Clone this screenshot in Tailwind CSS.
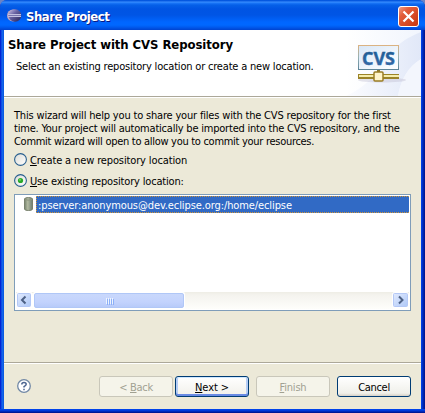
<!DOCTYPE html>
<html lang="en">
<head>
<meta charset="utf-8">
<title>Share Project</title>
<script src="https://cdn.jsdelivr.net/npm/@tailwindcss/browser@4"></script>
</head>
<body class="w-[425px] h-[413px] overflow-hidden bg-[#6b83c4] text-black text-[11px] leading-[13px] whitespace-nowrap font-['DejaVu_Sans_Condensed','DejaVu_Sans',sans-serif] [font-stretch:condensed]">
<main class="w-[425px] h-[413px] flex flex-col rounded-t-[7px] overflow-hidden bg-[linear-gradient(0deg,#00138c_0,#001da0_1px,#0036d5_2px,#0048f1_4px,transparent_4px),linear-gradient(90deg,#0019cf_0,#0831d9_1px,#166aee_2px,#0855dd_4px,#0855dd_421px,#0048f1_421px,#0036d5_422px,#001da0_424px,#00138c_425px)]">
  <header class="h-[30px] shrink-0 flex items-center pl-[7px] pr-[5px] pt-[4px] bg-[linear-gradient(180deg,#0058e0_0,#0958e0_1px,#3b91ff_2px,#1b77f8_3px,#0560e8_5px,#0054e3_9px,#0055e5_15px,#0066ff_22px,#0068ff_25px,#005bf0_27px,#0043cf_30px)]">
    <svg class="w-[15px] h-[13px] shrink-0 -mt-[3px]" viewBox="0 0 15 13">
      <defs><linearGradient id="ecl" x1="0" y1="0" x2="1" y2="1"><stop offset="0" stop-color="#c9bde4"/><stop offset=".4" stop-color="#6962a3"/><stop offset="1" stop-color="#252153"/></linearGradient></defs>
      <ellipse cx="6" cy="6.5" rx="6" ry="6" fill="#b9a6c4"/>
      <ellipse cx="8" cy="6.5" rx="6.3" ry="6.2" fill="url(#ecl)"/>
      <path d="M1 5.5h13M1 7.500h13" stroke="#c2bfe0" stroke-width="1"/><path d="M1.5 6.500h12.5" stroke="#7973ac" stroke-width="1"/>
    </svg>
    <h1 class="ml-[4px] grow text-[13px] leading-[16px] font-bold text-white [text-shadow:1px_1px_0_#0a1883] tracking-[-0.45px]">Share Project</h1>
    <button class="w-[21px] h-[21px] -mt-px mr-px" aria-label="Close">
      <svg class="block w-[21px] h-[21px]" viewBox="0 0 21 21">
        <defs><linearGradient id="cl" x1="0" y1="0" x2="1" y2="1"><stop offset="0" stop-color="#f0a28c"/><stop offset=".3" stop-color="#e35d3b"/><stop offset="1" stop-color="#c6340c"/></linearGradient></defs>
        <rect x=".5" y=".5" width="20" height="20" rx="2.5" fill="url(#cl)" stroke="#fff"/>
        <path d="M5.500 5.500l10 10M15.500 5.500l-10 10" stroke="#fff" stroke-width="2.2"/>
      </svg>
    </button>
  </header>
  <div class="mx-[4px] mb-[4px] h-[379px] flex flex-col bg-[#ece9d8]">
    <section class="h-[68px] shrink-0 flex justify-between bg-white border-b border-white shadow-[inset_0_-1px_0_#aca899]">
      <div>
        <h2 class="mt-[7px] ml-[4px] text-[13px] leading-[16px] font-bold tracking-[-0.08px]">Share Project with CVS Repository</h2>
        <p class="mt-[7px] ml-[12px] tracking-[-0.19px]">Select an existing repository location or create a new location.</p>
      </div>
      <svg class="w-[75px] h-[66px] shrink-0" viewBox="0 0 75 66">
        <defs>
          <linearGradient id="bg" x1="0" y1="0" x2="1" y2="0"><stop offset="0" stop-color="#fff"/><stop offset="1" stop-color="#f1f5fd"/></linearGradient>
          <linearGradient id="sw" x1="0" y1="0" x2="1" y2="0"><stop offset="0" stop-color="#fbfcff"/><stop offset="1" stop-color="#e1e8f8"/></linearGradient>
          <linearGradient id="bd" x1="0" y1="0" x2="0" y2="1"><stop offset="0" stop-color="#dbb383"/><stop offset=".5" stop-color="#93afb4"/><stop offset="1" stop-color="#5d8498"/></linearGradient>
          <linearGradient id="scr" x1="0" y1="0" x2="1" y2="1"><stop offset="0" stop-color="#d8e7f8"/><stop offset="1" stop-color="#fff"/></linearGradient>
          <linearGradient id="tx" x1="0" y1="0" x2="0" y2="1"><stop offset="0" stop-color="#16578d"/><stop offset="1" stop-color="#3a6eae"/></linearGradient>
        </defs>
        <rect width="75" height="66" fill="url(#bg)"/>
        <path d="M75 2C62 7 51 14 43 25C32 44 18 58 0 66H52C55 49 62 37 75 29Z" fill="url(#sw)"/>
        <path d="M75 29C62 37 55 49 52 66H75Z" fill="#f3f6fd"/>
        <ellipse cx="36" cy="50" rx="24" ry="2.500" fill="#bdbcd0" opacity=".4"/>
        <rect x="12.500" y="15.500" width="40" height="24" fill="url(#scr)" stroke="url(#bd)"/>
        <text class="[font-stretch:normal]" x="16" y="34.500" textLength="33" lengthAdjust="spacingAndGlyphs" font-family="Open Sans, sans-serif" font-weight="700" font-size="17" fill="url(#tx)" stroke="url(#tx)" stroke-width=".4">CVS</text>
        <path d="M12 46.500h41" stroke="#9b8328" stroke-width="5"/><path d="M13 46h40" stroke="#f5ecab" stroke-width="2"/>
        <path d="M31 41h3" stroke="#8d7a31" stroke-width="2"/>
        <rect x="28" y="42" width="9" height="9" rx="1" fill="#fff4ca" stroke="#9b7d25" stroke-width="1.500"/>
      </svg>
    </section>
    <section class="h-[266px] shrink-0 px-[10px] pt-[11px] border-b border-white shadow-[inset_0_-1px_0_#aca899]">
      <div>
        <p class="tracking-[-0.18px]">This wizard will help you to share your files with the CVS repository for the first</p>
        <p class="tracking-[-0.21px]">time. Your project will automatically be imported into the CVS repository, and the</p>
        <p class="tracking-[-0.29px]">Commit wizard will open to allow you to commit your resources.</p>
      </div>
      <div class="flex items-center mt-[5px] h-[13px] gap-[3px]">
        <svg class="w-[13px] h-[13px]" viewBox="0 0 13 13"><defs><linearGradient id="ra" x1="0" y1="0" x2="1" y2="1"><stop offset="0" stop-color="#dcdcd7"/><stop offset="1" stop-color="#fff"/></linearGradient></defs><circle cx="6.500" cy="6.500" r="5.900" fill="url(#ra)" stroke="#285f8e" stroke-width="1.100"/></svg>
        <span class="tracking-[-0.13px] pt-px"><u class="underline underline-offset-[1px]">C</u>reate a new repository location</span>
      </div>
      <div class="flex items-center mt-[8px] h-[13px] gap-[3px]">
        <svg class="w-[13px] h-[13px]" viewBox="0 0 13 13"><circle cx="6.500" cy="6.500" r="5.900" fill="url(#ra)" stroke="#285f8e" stroke-width="1.100"/><circle cx="6.500" cy="6.500" r="2.600" fill="#29a829"/><circle cx="6" cy="5.800" r="1.100" fill="#5fd55c"/></svg>
        <span class="tracking-[-0.17px] pt-px"><u class="underline underline-offset-[1px]">U</u>se existing repository location:</span>
      </div>
      <div class="mt-[7px] w-[397px] h-[117px] border border-[#7f9db9] bg-white p-px flex flex-col justify-between">
        <div class="flex h-[17px]">
          <svg class="ml-[8px] w-[9px] h-[15px] shrink-0" viewBox="0 0 9 15"><defs><linearGradient id="cy"><stop offset="0" stop-color="#74826c"/><stop offset=".4" stop-color="#b2b9a0"/><stop offset="1" stop-color="#6c7d71"/></linearGradient></defs><path d="M.5 3Q.5 1.500 4.500 1.500T8.500 3v10Q8.500 14.500 4.500 14.500T.5 13Z" fill="url(#cy)" stroke="#79816e"/><path d="M1 3.500q3.500 1.500 7 0" fill="none" stroke="#8c967e"/></svg>
          <div class="ml-[3px] grow h-[17px] bg-[#316ac5] border-y border-l border-dotted border-[#ce953a] text-white pl-px leading-[17px] tracking-[-0.1px]">:pserver:anonymous@dev.eclipse.org:/home/eclipse</div>
        </div>
        <div class="h-[17px] flex items-center bg-[linear-gradient(180deg,#eeede5_0,#f4f3ee_3px,#fefefb_100%)]">
          <svg class="w-[17px] h-[17px] shrink-0" viewBox="0 0 17 17"><defs><linearGradient id="sb" x1="0" y1="0" x2="1" y2="1"><stop offset="0" stop-color="#e1eafe"/><stop offset="1" stop-color="#aec8f7"/></linearGradient></defs><rect x=".5" y=".5" width="16" height="16" rx="2" fill="#fff" stroke="#fff"/><rect x="1.500" y="1.500" width="13" height="13" rx="1" fill="url(#sb)" stroke="#b4c8f6"/><path d="M9.500 4.500L6 8l3.500 3.500" fill="none" stroke="#4d6185" stroke-width="2"/></svg>
          <div class="w-[152px] h-[17px] p-px bg-white rounded-[2px]"><div class="h-[15px] rounded-[2px] border border-[#b0c7f7] bg-[linear-gradient(180deg,#c9d8fc,#c3d3fd_60%,#b8cbf9)] flex items-center justify-center gap-px"><i class="w-px h-[6px] bg-[#eef4fe] shadow-[1px_1px_0_#8cb0f8]"></i><i class="w-px h-[6px] bg-[#eef4fe] shadow-[1px_1px_0_#8cb0f8]"></i><i class="w-px h-[6px] bg-[#eef4fe] shadow-[1px_1px_0_#8cb0f8]"></i><i class="w-px h-[6px] bg-[#eef4fe] shadow-[1px_1px_0_#8cb0f8]"></i></div></div>
          <svg class="ml-auto w-[17px] h-[17px] shrink-0" viewBox="0 0 17 17"><rect x=".5" y=".5" width="16" height="16" rx="2" fill="#fff" stroke="#fff"/><rect x="1.500" y="1.500" width="14" height="13" rx="1" fill="url(#sb)" stroke="#b4c8f6"/><path d="M7 4.500L10.500 8L7 11.500" fill="none" stroke="#4d6185" stroke-width="2"/></svg>
        </div>
      </div>
    </section>
    <footer class="h-[45px] flex items-start pt-[12px] pl-[13px]">
      <svg class="w-[14px] h-[14px] mt-[3px] shrink-0" viewBox="0 0 14 14"><circle cx="7" cy="7" r="6.300" fill="#fff" stroke="#7188a5" stroke-width="1.300"/><path d="M4.800 5.500Q4.800 3.500 7 3.500T9.200 5.300Q9.200 6.400 7 7.600V8.600M7 9.800V11.300" fill="none" stroke="#4c6590" stroke-width="1.500"/></svg>
      <button class="ml-[68px] w-[74px] h-[21px] pt-px border border-[#c9c7ba] rounded-[3px] bg-[#f5f4ea] text-[#a1a192] tracking-[-0.3px]">&lt; <u class="underline underline-offset-[1px]">B</u>ack</button>
      <button class="ml-[2px] w-[74px] h-[21px] pt-px border border-[#003c74] rounded-[3px] bg-[linear-gradient(180deg,#fff,#f1f0ea)] shadow-[inset_0_1px_0_#cee7ff,inset_0_-2px_0_#698be4,inset_2px_0_0_#b5cdf5,inset_-2px_0_0_#b5cdf5] tracking-[-0.1px]"><u class="underline underline-offset-[1px]">N</u>ext &gt;</button>
      <button class="ml-[7px] w-[74px] h-[21px] pt-px border border-[#c9c7ba] rounded-[3px] bg-[#f5f4ea] text-[#a1a192] tracking-[-0.2px]"><u class="underline underline-offset-[1px]">F</u>inish</button>
      <button class="ml-[7px] w-[74px] h-[21px] pt-px border border-[#003c74] rounded-[3px] bg-[linear-gradient(180deg,#fff,#f0f0ea_85%,#d6d0c5)] tracking-[-0.3px]">Cancel</button>
    </footer>
  </div>
</main>
</body>
</html>
